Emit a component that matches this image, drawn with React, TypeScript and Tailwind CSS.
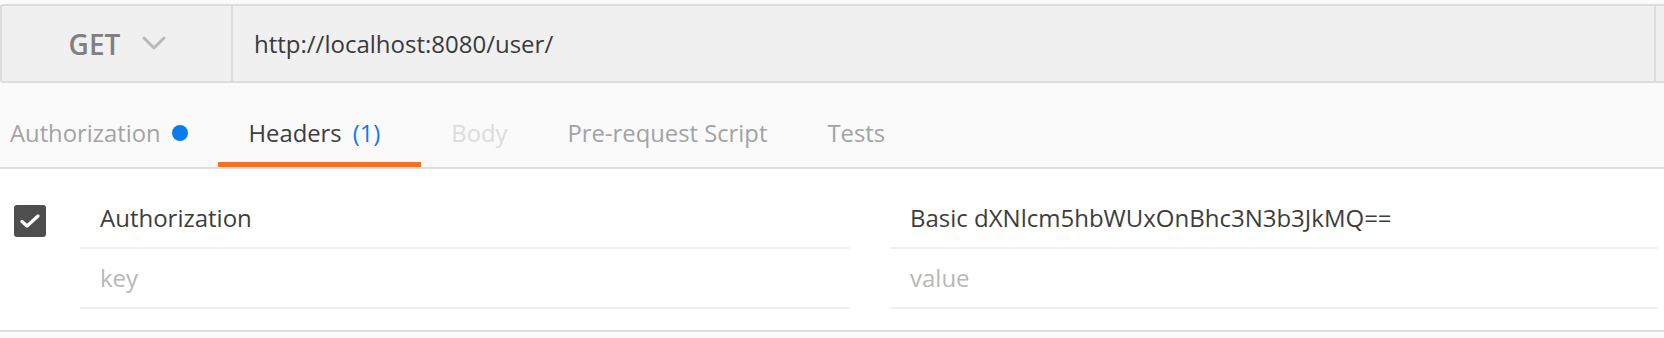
import React from "react";

const tabs = [
  { name: "Authorization", cls: "pl-[10px] pr-[30px] text-[#a3a3a3]", dot: true },
  { name: "Headers", cls: "pl-[31px] pr-[41px] text-[#3d3d3d]", count: "(1)", active: true },
  { name: "Body", cls: "px-[30px] text-[#dcdcdc]" },
  { name: "Pre-request Script", cls: "px-[30px] text-[#a3a3a3]" },
  { name: "Tests", cls: "px-[30px] text-[#a3a3a3]" },
];

const rows = [
  { key: "Authorization", value: "Basic dXNlcm5hbWUxOnBhc3N3b3JkMQ==", checked: true },
  { key: "key", value: "value", placeholder: true },
];

const Checkbox = () => (
  <div className="w-[32px] h-[32px] mt-[3px] rounded-[3px] bg-[#4e4e4e] flex items-center justify-center">
    <svg width="20" height="14" viewBox="0 0 20 14" fill="none">
      <polyline
        points="2,7.5 7,12 18,2"
        stroke="#ffffff"
        strokeWidth="3.2"
        strokeLinecap="round"
        strokeLinejoin="round"
      />
    </svg>
  </div>
);

export default function App() {
  return (
    <div className="w-[1664px] h-[338px] overflow-hidden bg-[#fafafa] font-['Open_Sans',sans-serif]">
      {/* request bar */}
      <div className="pt-[4px]">
        <div className="flex h-[79px] mr-[-10px] border-2 border-[#dcdcdc] rounded-[3px] bg-[#f0f0f0]">
          <div className="w-[231px] shrink-0 flex items-center justify-center gap-[22px] border-r-2 border-[#dcdcdc]">
            <span className="text-[28px] font-semibold text-[#808080] leading-[36px] ml-[2px]">GET</span>
            <svg width="24" height="14" viewBox="0 0 24 14" fill="none" className="mt-[-2px]">
              <polyline
                points="2,2 12,12 22,2"
                stroke="#b8b8b8"
                strokeWidth="3"
                strokeLinecap="round"
                strokeLinejoin="round"
              />
            </svg>
          </div>
          <div className="flex-1 flex items-center pl-[21px] text-[24px] leading-[32px] text-[#3a3a3a]">
            http://localhost:8080/user/
          </div>
          <div className="w-[18px] shrink-0 border-l-2 border-[#dcdcdc]" />
        </div>
      </div>

      {/* tabs */}
      <div className="h-[86px] flex items-end border-b-2 border-[#dedede]">
        {tabs.map((t) => (
          <div
            key={t.name}
            className={`flex items-center gap-[11px] text-[23.8px] leading-[32px] pb-[13px] border-b-[5px] ${t.active ? "border-[#f47023]" : "border-transparent"} ${t.cls}`}
          >
            <span>{t.name}</span>
            {t.dot && <span className="w-[16px] h-[16px] rounded-full bg-[#0a7cf0]" />}
            {t.count && <span className="text-[#0a7cf0]">{t.count}</span>}
          </div>
        ))}
      </div>

      {/* header rows */}
      <div className="bg-white pt-[20px] pb-[21px] border-b-2 border-[#dedede]">
        {rows.map((r) => (
          <div key={r.key} className="flex h-[60px]">
            <div className="w-[80px] shrink-0 flex items-center pl-[14px]">
              {r.checked && <Checkbox />}
            </div>
            <div
              className={`w-[770px] shrink-0 flex items-center pl-[20px] border-b-2 border-[#efefef] text-[24px] leading-[32px] ${r.placeholder ? "text-[#b8b8b8]" : "text-[#3d3d3d]"}`}
            >
              {r.key}
            </div>
            <div className="w-[40px] shrink-0" />
            <div
              className={`w-[768px] shrink-0 flex items-center pl-[20px] border-b-2 border-[#efefef] text-[24px] leading-[32px] ${r.placeholder ? "text-[#b8b8b8]" : "text-[#3d3d3d]"}`}
            >
              {r.value}
            </div>
          </div>
        ))}
      </div>
    </div>
  );
}
